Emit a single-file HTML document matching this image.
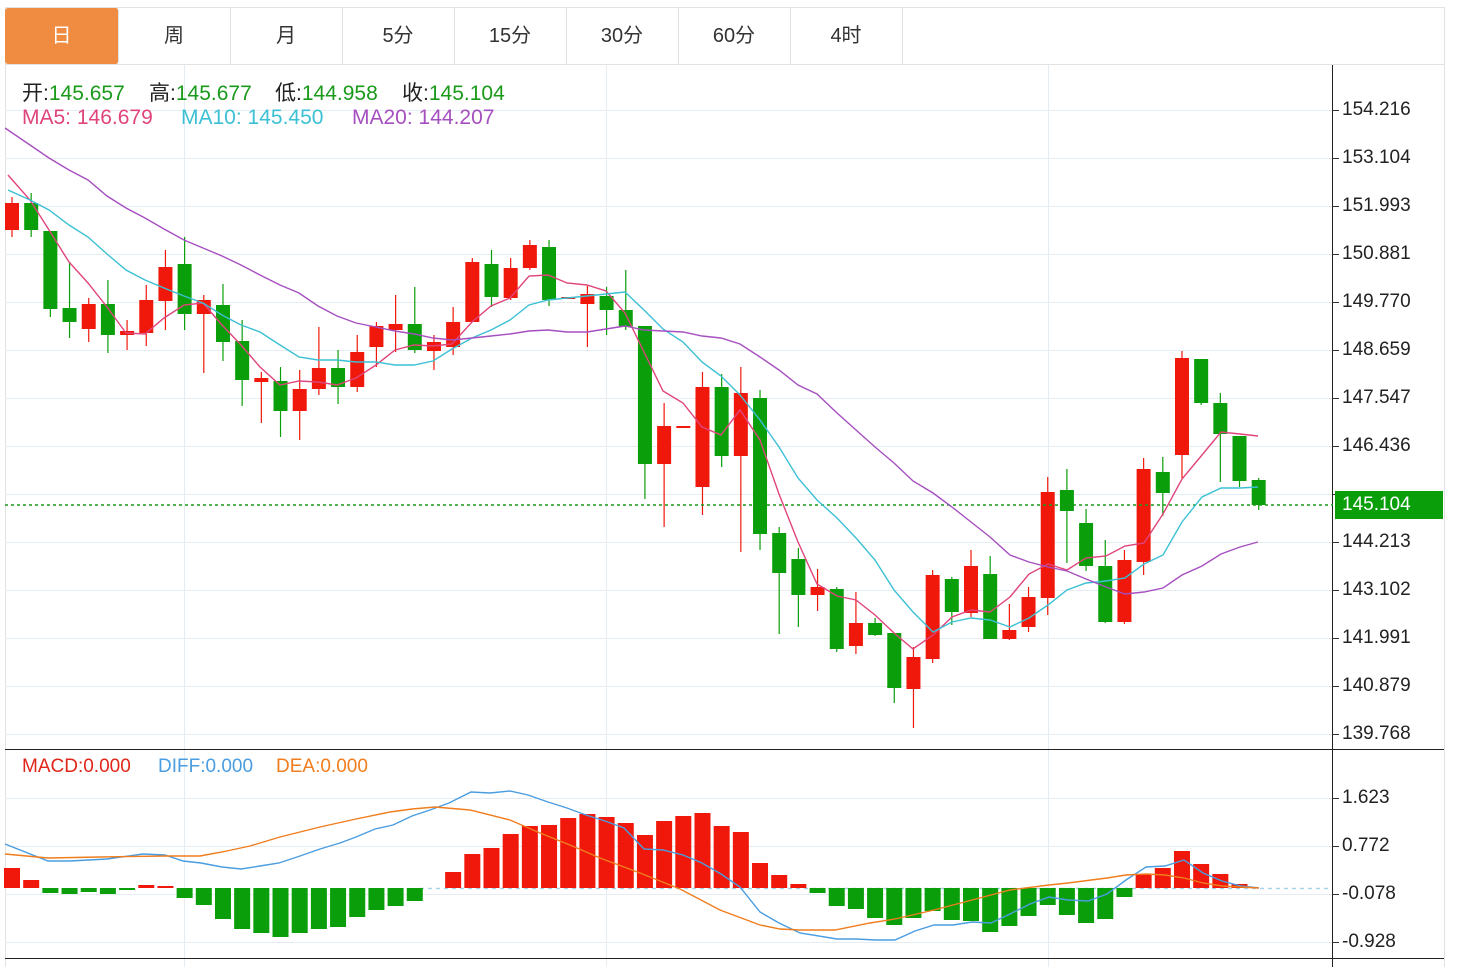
<!DOCTYPE html>
<html><head><meta charset="utf-8"><style>
html,body{margin:0;padding:0;background:#fff;width:1461px;height:967px;overflow:hidden}
body{font-family:"Liberation Sans","Noto Sans CJK SC",sans-serif;position:relative}
.tab{position:absolute;top:8px;height:56px;width:112px;border-right:1px solid #e2e2e2;text-align:center;line-height:56px;font-size:20px;color:#333}
.t{position:absolute;font-size:20px;white-space:nowrap}
.h{position:absolute;font-size:21px;white-space:nowrap;top:77px;color:#222}
.h span{color:#1a9a1a}
.m{position:absolute;font-size:21px;white-space:nowrap;top:106px}
.q{position:absolute;font-size:19px;white-space:nowrap;top:756px}
svg{position:absolute;left:0;top:0}
</style></head><body>
<svg id="s" width="1461" height="967" xmlns="http://www.w3.org/2000/svg"></svg>
<div class="tab" style="left:5px;width:113px;background:#f08c42;color:#fff;border-radius:3px">日</div>
<div class="tab" style="left:118px">周</div>
<div class="tab" style="left:230px">月</div>
<div class="tab" style="left:342px">5分</div>
<div class="tab" style="left:454px">15分</div>
<div class="tab" style="left:566px">30分</div>
<div class="tab" style="left:678px">60分</div>
<div class="tab" style="left:790px">4时</div>
<div class="h" style="left:22px">开:<span>145.657</span></div>
<div class="h" style="left:149px">高:<span>145.677</span></div>
<div class="h" style="left:275px">低:<span>144.958</span></div>
<div class="h" style="left:402px">收:<span>145.104</span></div>
<div class="m" style="left:22px;color:#e0447c">MA5: 146.679</div>
<div class="m" style="left:181px;color:#3cc0d4">MA10: 145.450</div>
<div class="m" style="left:352px;color:#a64fc0">MA20: 144.207</div>
<div class="q" style="left:22px;color:#e0261a">MACD:0.000</div>
<div class="q" style="left:158px;color:#4a9de0">DIFF:0.000</div>
<div class="q" style="left:276px;color:#f07d1e">DEA:0.000</div>
<script>
var s=document.getElementById('s'),h='';
function L(x1,y1,x2,y2,c,w,d){h+='<line x1="'+x1+'" y1="'+y1+'" x2="'+x2+'" y2="'+y2+'" stroke="'+c+'" stroke-width="'+(w||1)+'"'+(d?' stroke-dasharray="'+d+'"':'')+'/>';}
function R(x,y,w,hh,c){h+='<rect x="'+x+'" y="'+y+'" width="'+w+'" height="'+hh+'" fill="'+c+'"/>';}
function P(pts,c){h+='<polyline fill="none" stroke="'+c+'" stroke-width="1.4" points="'+pts.map(function(p){return p.join(',')}).join(' ')+'"/>';}
L(5,7.5,1444,7.5,'#e2e2e2');L(5,64.5,1444,64.5,'#e2e2e2');L(5.5,7,5.5,967,'#e2e2e2');L(1444.5,7,1444.5,967,'#e2e2e2');
var gy=[110,158,206,254,302,350,398,446,494,542,590,638,686,734];
gy.forEach(function(y){L(5,y+.5,1333,y+.5,'#e6edf2');L(1333,y+.5,1339,y+.5,'#333');});
[798,846,894,942].forEach(function(y){L(5,y+.5,1333,y+.5,'#e6edf2');L(1333,y+.5,1339,y+.5,'#333');});
[184,606,1048].forEach(function(x){L(x+.5,65,x+.5,967,'#e6edf2');});
L(5,749.5,1444,749.5,'#222');L(5,958.5,1444,958.5,'#222');L(1332.5,65,1332.5,967,'#222');
var G='#0a9f0a',Rd='#f0180a';
var c=[['r',203,230,197,237],['g',203,230,193,237],['g',231,309,231,317],['g',308,322,262,338],['r',304,329,298,342],['g',304,335,280,353],['r',331,335,320,350],['r',300,333,285,346],['r',267,301,250,330],['g',264,314,237,330],['r',300,314,295,373],['g',305,342,284,361],['g',341,380,320,406],['r',378,382,372,423],['g',381,411,367,437],['r',389,411,370,440],['r',368,389,327,395],['g',368,387,350,404],['r',352,387,335,392],['r',326,347,322,367],['r',324,330,295,352],['g',324,350,287,353],['r',342,351,335,370],['r',322,347,307,355],['r',262,322,258,322],['g',264,297,250,307],['r',268,298,258,300],['r',245,268,240,270],['g',247,300,240,306],['r',297,299,297,299],['r',294,304,286,347],['g',296,310,287,335],['g',310,327,270,330],['g',326,464,326,499],['r',426,464,403,527],['r',426,428,426,428],['r',387,487,372,515],['g',387,456,374,467],['r',393,456,367,552],['g',398,534,390,550],['g',533,573,527,634],['g',559,595,548,627],['r',587,595,569,611],['g',589,649,587,652],['r',623,646,592,654],['g',623,635,618,636],['g',633,688,633,703],['r',657,689,647,728],['r',575,659,570,663],['g',579,612,577,625],['r',566,613,550,617],['g',574,639,556,639],['r',630,639,604,640],['r',597,627,587,632],['r',492,598,477,615],['g',490,511,469,563],['g',523,566,509,571],['g',566,622,540,623],['r',560,622,550,624],['r',469,562,458,575],['g',472,493,457,516],['r',358,455,351,478],['g',359,403,359,405],['g',403,434,393,482],['g',436,481,436,487],['g',480,505,478,510]];
function X(i){return 12+i*19.18;}
c.forEach(function(k,i){var x=X(i),col=k[0]=='r'?Rd:G;L(x,k[3],x,k[4],col,1.2);R(x-7,k[1],14,Math.max(2,k[2]-k[1]),col);});
L(5,505,1333,505,'#1a9a1a',1.6,'3,3');
P([[8,175],[30,200],[49,230],[69,262],[88,283],[107,307],[126,333],[145,334],[164,318],[184,305],[203,303],[222,325],[241,345],[260,367],[280,385],[299,381],[318,382],[337,385],[356,378],[376,365],[395,350],[414,345],[433,346],[452,344],[472,322],[491,306],[510,298],[529,276],[548,275],[567,283],[587,285],[606,291],[625,313],[644,352],[663,391],[683,403],[702,427],[721,435],[740,410],[760,440],[779,494],[798,542],[817,584],[837,596],[856,600],[875,615],[894,633],[913,649],[933,635],[952,617],[971,610],[990,612],[1010,597],[1029,574],[1048,564],[1067,570],[1086,558],[1106,556],[1125,546],[1144,543],[1163,514],[1182,479],[1202,455],[1221,432],[1240,434],[1258,436]],'#e0447c');
P([[8,190],[30,200],[49,210],[69,225],[88,237],[107,254],[126,270],[145,280],[164,288],[184,296],[203,303],[222,315],[241,325],[260,332],[280,345],[299,357],[318,360],[337,360],[356,362],[376,362],[395,365],[414,365],[433,361],[452,349],[472,338],[491,330],[510,320],[529,305],[548,300],[567,298],[587,296],[606,294],[625,292],[644,310],[663,329],[683,342],[702,362],[721,376],[740,395],[760,420],[779,447],[798,478],[817,500],[837,518],[856,538],[875,560],[894,590],[913,612],[933,632],[952,622],[971,618],[990,620],[1010,627],[1029,618],[1048,605],[1067,590],[1086,583],[1106,581],[1125,578],[1144,564],[1163,555],[1182,522],[1202,497],[1221,488],[1240,488],[1258,487]],'#3cc0d4');
P([[5,128],[30,145],[49,158],[69,170],[88,180],[107,196],[126,208],[145,218],[164,229],[184,240],[203,248],[222,256],[241,265],[260,275],[280,285],[299,293],[318,306],[337,316],[356,323],[376,327],[395,331],[414,334],[433,338],[452,340],[472,338],[491,336],[510,334],[529,331],[548,330],[567,332],[587,332],[606,329],[625,326],[644,330],[663,331],[683,332],[702,336],[721,338],[740,344],[760,357],[779,370],[798,385],[817,394],[837,413],[856,430],[875,447],[894,463],[913,481],[933,493],[952,507],[971,522],[990,537],[1010,555],[1029,562],[1048,567],[1067,571],[1086,579],[1106,587],[1125,594],[1144,592],[1163,588],[1182,575],[1202,566],[1221,554],[1240,547],[1258,542]],'#a64fc0');
R(1335,491,108,28,'#0a9f0a');
L(420,888.5,1330,888.5,'#a8d4ec',1.5,'4,4');
var m=[868,880,893,894,892,894,890,885,886,898,905,919,929,933,937,933,929,927,917,910,906,901,888,872,854,848,834,826,825,818,814,817,823,835,821,816,813,826,832,863,875,884,893,906,909,918,925,918,911,920,921,932,926,916,905,915,923,919,897,874,868,851,864,874,884,888];
m.forEach(function(y,i){var x=X(i);if(Math.abs(y-888)<1)return;if(y<888)R(x-8,y,16,888-y,Rd);else R(x-8,888,16,y-888,G);});
P([[5,844],[48,861],[70,861],[107,859],[143,854],[165,855],[183,861],[201,863],[222,867],[241,869],[260,866],[279,863],[300,856],[320,849],[340,843],[356,837],[375,829],[393,825],[412,816],[430,810],[449,803],[471,792],[490,793],[510,791],[528,795],[548,802],[567,808],[586,815],[605,821],[624,828],[644,849],[663,850],[683,855],[702,863],[721,874],[740,887],[760,912],[779,923],[800,933],[837,939],[856,939],[876,940],[895,940],[915,931],[934,925],[953,925],[972,922],[991,923],[1010,914],[1030,904],[1049,897],[1068,900],[1088,901],[1107,894],[1126,880],[1146,867],[1165,866],[1184,860],[1203,873],[1222,881],[1241,886],[1259,888]],'#4a9de0');
P([[5,854],[48,858],[100,857],[165,856],[200,856],[222,852],[250,846],[280,837],[320,827],[356,819],[390,812],[412,809],[435,807],[470,810],[510,820],[540,833],[570,845],[600,858],[640,873],[680,889],[720,910],[760,925],[780,929],[800,930],[835,930],[870,923],[895,919],[934,910],[972,900],[1010,890],[1049,885],[1068,883],[1107,878],[1126,875],[1146,874],[1165,875],[1184,878],[1203,883],[1222,886],[1259,888]],'#f07d1e');
s.innerHTML=h;
</script>
<div class="t" style="left:1342px;top:99px;font-size:19px;color:#222">154.216</div>
<div class="t" style="left:1342px;top:147px;font-size:19px;color:#222">153.104</div>
<div class="t" style="left:1342px;top:195px;font-size:19px;color:#222">151.993</div>
<div class="t" style="left:1342px;top:243px;font-size:19px;color:#222">150.881</div>
<div class="t" style="left:1342px;top:291px;font-size:19px;color:#222">149.770</div>
<div class="t" style="left:1342px;top:339px;font-size:19px;color:#222">148.659</div>
<div class="t" style="left:1342px;top:387px;font-size:19px;color:#222">147.547</div>
<div class="t" style="left:1342px;top:435px;font-size:19px;color:#222">146.436</div>
<div class="t" style="left:1342px;top:494px;font-size:19px;color:#fff">145.104</div>
<div class="t" style="left:1342px;top:531px;font-size:19px;color:#222">144.213</div>
<div class="t" style="left:1342px;top:579px;font-size:19px;color:#222">143.102</div>
<div class="t" style="left:1342px;top:627px;font-size:19px;color:#222">141.991</div>
<div class="t" style="left:1342px;top:675px;font-size:19px;color:#222">140.879</div>
<div class="t" style="left:1342px;top:723px;font-size:19px;color:#222">139.768</div>
<div class="t" style="left:1342px;top:787px;font-size:19px;color:#222">1.623</div>
<div class="t" style="left:1342px;top:835px;font-size:19px;color:#222">0.772</div>
<div class="t" style="left:1342px;top:883px;font-size:19px;color:#222">-0.078</div>
<div class="t" style="left:1342px;top:931px;font-size:19px;color:#222">-0.928</div>
</body></html>
